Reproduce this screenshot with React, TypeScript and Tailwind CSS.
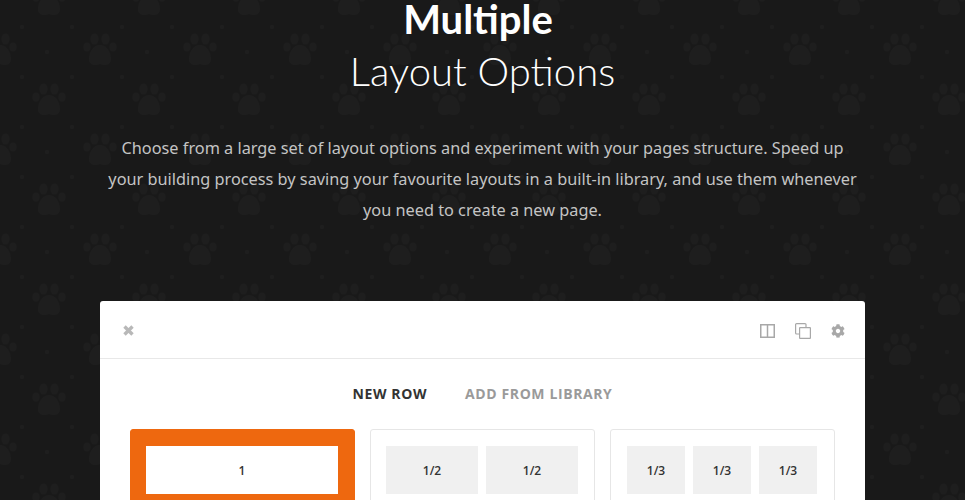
import { FaCog } from "react-icons/fa";

const ROWS = [
  { id: "full", cells: ["1"], box: "border-[#ee680f] bg-[#ee680f] pl-[15px] pr-[16px]", cell: "bg-white" },
  { id: "half", cells: ["1/2", "1/2"], box: "border-[#e6e6e6] bg-white pl-[15px] pr-[16px]", cell: "bg-[#f0f0f0]" },
  { id: "third", cells: ["1/3", "1/3", "1/3"], box: "border-[#e6e6e6] bg-white pl-[16px] pr-[17px]", cell: "bg-[#f0f0f0]" },
];

function Paw({ x, y }: { x: number; y: number }) {
  return (
    <g transform={`translate(${x} ${y})`}>
      <ellipse cx="-5.5" cy="-11" rx="4" ry="5.5" />
      <ellipse cx="5.5" cy="-11" rx="4" ry="5.5" />
      <ellipse cx="-13" cy="-3" rx="3.5" ry="4.5" />
      <ellipse cx="13" cy="-3" rx="3.5" ry="4.5" />
      <path d="M0 -5C7 -5 11 3 11 9C11 14 7 15 4 15C2 15 1 14 0 14C-1 14 -2 15 -4 15C-7 15 -11 14 -11 9C-11 3 -7 -5 0 -5Z" />
    </g>
  );
}

function PawPattern() {
  return (
    <svg className="absolute inset-0 h-full w-full" aria-hidden="true">
      <defs>
        <pattern id="paws" width="100" height="100" patternUnits="userSpaceOnUse">
          <g fill="#1e1e1e">
            <Paw x={49} y={0} />
            <Paw x={49} y={100} />
            <Paw x={0} y={50} />
            <Paw x={100} y={50} />
            <circle cx="22" cy="27" r="2" />
            <circle cx="72" cy="27" r="2" />
            <circle cx="47" cy="52" r="2" />
            <circle cx="22" cy="77" r="2" />
            <circle cx="72" cy="77" r="2" />
          </g>
        </pattern>
      </defs>
      <rect width="100%" height="100%" fill="url(#paws)" />
    </svg>
  );
}

export default function App() {
  return (
    <div className="relative h-[500px] w-[965px] overflow-hidden bg-[#191919] font-['Lato',sans-serif]">
      <PawPattern />

      <div className="relative flex flex-col items-center">
        {/* ---------- copy ---------- */}
        <h2 className="text-center text-[40px] text-white">
          <span className="block pr-[9px] font-bold leading-[38px]">Multiple</span>
          <span className="mt-[7px] block font-light leading-[52px]">Layout Options</span>
        </h2>

        <p className="mt-[36px] w-[765px] text-center font-['Noto_Sans',sans-serif] text-[16.3px] leading-[31px] text-[#c4c4c4]">
          Choose from a large set of layout options and experiment with your pages structure. Speed up
          <br />
          your building process by saving your favourite layouts in a built-in library, and use them whenever
          <br />
          you need to create a new page.
        </p>

        {/* ---------- panel ---------- */}
        <div className="mt-[75px] h-[260px] w-[765px] rounded-[3px] bg-white font-['Open_Sans',sans-serif]">
          <div className="flex h-[58px] items-center border-b border-[#e8e8e8] pl-[23px] pr-[20px]">
            <svg width="11" height="11" viewBox="0 0 11 11" className="mt-[2px] text-[#b8b8b8]" stroke="currentColor" strokeWidth="3.4">
              <path d="M1.5 1.500L9.500 9.500M9.500 1.500L1.500 9.500" />
            </svg>
            <div className="ml-auto flex items-center gap-[20px] pt-[3px] text-[#a8a8a8]">
              <svg width="15" height="14" viewBox="0 0 15 14" fill="none" stroke="currentColor" strokeWidth="1.5">
                <rect x="0.75" y="0.75" width="13.500" height="12.500" />
                <path d="M7.500 1V13" />
              </svg>
              <svg width="16" height="16" viewBox="0 0 16 16" fill="none" stroke="currentColor" strokeWidth="1.2">
                <path d="M11 4V1.600C11 1 10.600 0.600 10 0.600H1.600C1 0.600 0.600 1 0.600 1.600V10C0.600 10.600 1 11 1.600 11H4" />
                <rect x="4.600" y="4.600" width="10.800" height="10.800" rx="0.500" />
              </svg>
              <FaCog className="size-[14px]" />
            </div>
          </div>

          <div className="mt-[26px] flex justify-center gap-[38px] text-[14px] font-bold leading-[17px] tracking-[0.6px]">
            <span className="text-[#333333]">NEW ROW</span>
            <span className="text-[#9a9a9a]">ADD FROM LIBRARY</span>
          </div>

          <div className="mt-[27px] grid grid-cols-3 gap-[15px] px-[30px]">
            {ROWS.map((row) => (
              <div key={row.id} className={`flex gap-2 rounded-[3px] border py-[16px] ${row.box}`}>
                {row.cells.map((cell, i) => (
                  <div
                    key={i}
                    className={`flex h-[48px] flex-1 items-center justify-center pt-[1px] text-[12px] font-semibold text-[#333333] ${row.cell}`}
                  >
                    {cell}
                  </div>
                ))}
              </div>
            ))}
          </div>
        </div>
      </div>
    </div>
  );
}
